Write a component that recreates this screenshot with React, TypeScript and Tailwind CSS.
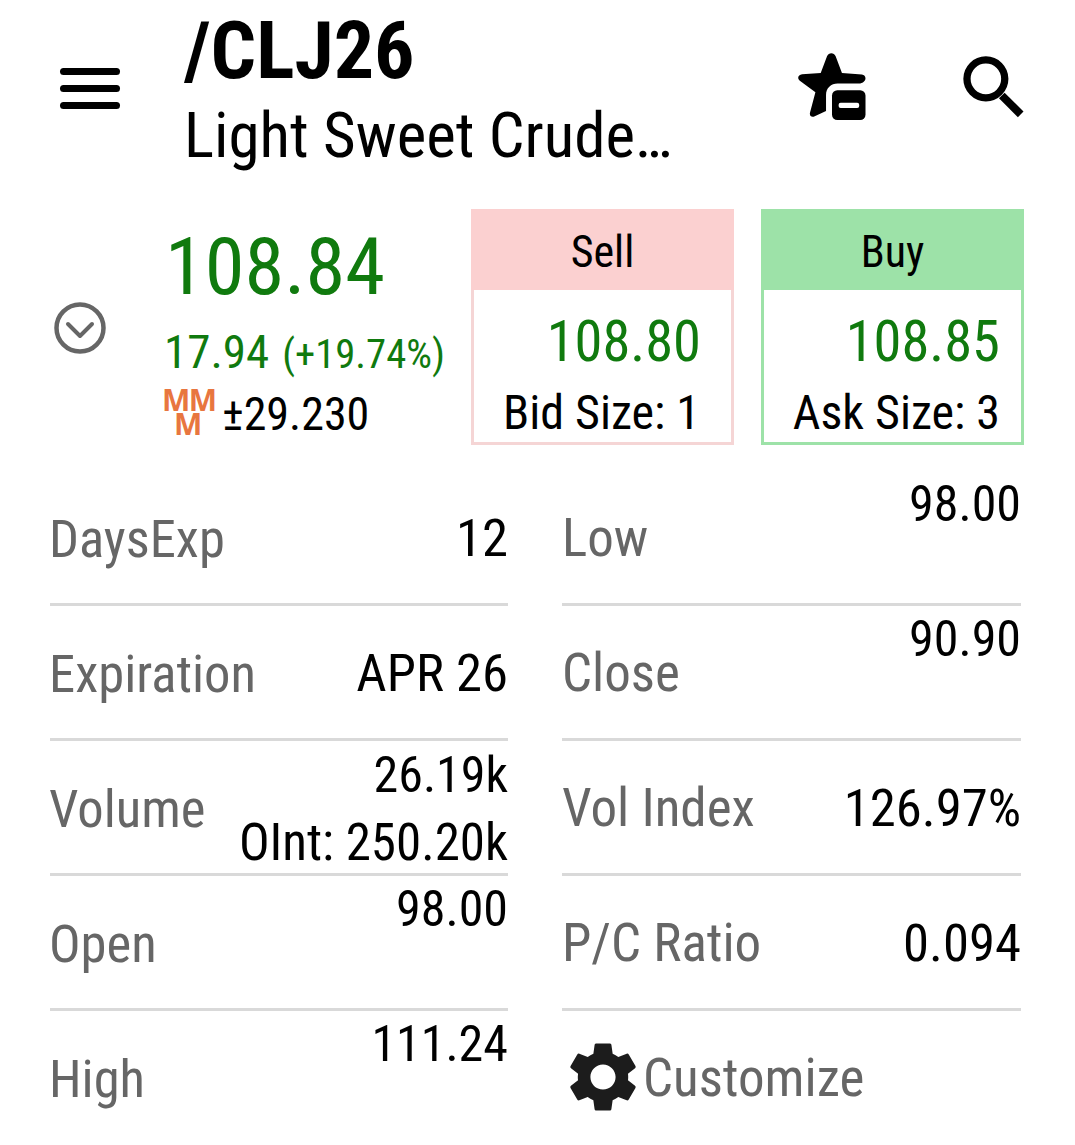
const GREEN = "text-[#107a0e]";

function StarMinus() {
  return (
    <svg viewBox="110 65 210 205" className="h-[68px] w-[70px]">
      <path
        fill="#000"
        d="M200 78C205 66 221 66 226 78L245 128L305 133C318 134 320 150 308 157L300 160H232C212 160 197 174 197 195V243L163 259C152 264 146 256 149 247L165 186L118 152C109 145 113 133 125 132L181 128Z"
      />
      <rect x="215" y="180" width="101" height="90" rx="16" fill="#000" />
      <rect x="235" y="218" width="62" height="16" rx="6" fill="#fff" />
    </svg>
  );
}

function Gear() {
  return (
    <svg viewBox="0 0 24 24" className="mr-[-2px] mb-[4px] ml-[-9px] h-[84px] w-[84px] shrink-0" fill="#1c1c1c">
      <path d="M19.140 12.940c.04-.3.06-.61.06-.94 0-.32-.02-.64-.07-.94l2.030-1.580c.18-.14.23-.41.12-.61l-1.920-3.320c-.12-.22-.37-.29-.59-.22l-2.390.96c-.5-.38-1.030-.7-1.620-.94l-.36-2.540c-.04-.24-.24-.41-.48-.41h-3.840c-.24 0-.43.17-.47.41l-.36 2.540c-.59.24-1.130.57-1.620.94l-2.390-.96c-.22-.08-.47 0-.59.22L2.740 8.870c-.12.21-.08.47.12.61l2.030 1.580c-.05.3-.09.63-.09.94s.02.64.07.94l-2.030 1.580c-.18.14-.23.41-.12.61l1.920 3.320c.12.22.37.29.59.22l2.390-.96c.5.38 1.030.7 1.620.94l.36 2.540c.05.24.24.41.48.41h3.840c.24 0 .44-.17.47-.41l.36-2.540c.59-.24 1.130-.56 1.620-.94l2.390.96c.22.08.47 0 .59-.22l1.920-3.320c.12-.22.07-.47-.12-.61l-2.010-1.580zM12 15.600c-1.980 0-3.600-1.620-3.600-3.600s1.620-3.600 3.600-3.600 3.600 1.620 3.600 3.600-1.620 3.600-3.600 3.600z" />
    </svg>
  );
}

function Quote({ side, size, price }: { side: string; size: string; price: string }) {
  const isSell = side === "Sell";
  return (
    <div className={`flex h-[236px] w-[263px] flex-col border-[3px] ${isSell ? "border-[#f5d5d5]" : "border-[#9de2a8]"}`}>
      <div className={`-mx-[3px] -mt-[3px] flex h-[81px] items-center justify-center pt-[4px] text-[44px] text-black ${isSell ? "bg-[#fbd0d0]" : "bg-[#9de2a8]"}`}>
        {side}
      </div>
      <div className={`mt-[18px] text-right text-[56.500px] leading-[68px] ${GREEN} ${isSell ? "pr-[30px]" : "pr-[21px]"}`}>{price}</div>
      <div className={`mt-[9px] text-right text-[48px] leading-[56px] text-black ${isSell ? "pr-[31px]" : "pr-[21px]"}`}>{size}</div>
    </div>
  );
}

type Line = { text: string; small?: boolean; wide?: boolean };
type Cell = { label: string; value: Line[]; top?: boolean };

const LEFT: Cell[] = [
  { label: "DaysExp", value: [{ text: "12" }] },
  { label: "Expiration", value: [{ text: "APR 26" }] },
  { label: "Volume", value: [{ text: "26.19k", small: true }, { text: "OInt: 250.20k", wide: true }] },
  { label: "Open", value: [{ text: "98.00", small: true }], top: true },
  { label: "High", value: [{ text: "111.24", small: true }], top: true },
];

const RIGHT: Cell[] = [
  { label: "Low", value: [{ text: "98.00", small: true }], top: true },
  { label: "Close", value: [{ text: "90.90", small: true }], top: true },
  { label: "Vol Index", value: [{ text: "126.97%" }] },
  { label: "P/C Ratio", value: [{ text: "0.094" }] },
];

function Row({ cell, last, shifted }: { cell: Cell; last?: boolean; shifted?: boolean }) {
  return (
    <div className={`flex h-[135px] items-center justify-between ${last ? "" : "border-b-[3px] border-[#d9d9d9]"}`}>
      <span className={`text-[#666666] ${last ? "mt-[1px]" : "mt-[4px]"} ${shifted ? "-ml-[1px] text-[52.600px]" : "text-[53px]"}`}>{cell.label}</span>
      <div className={`text-right leading-[67px] text-black ${cell.top ? "self-start" : "pt-[3px]"}`}>
        {cell.value.map((line) => (
          <div key={line.text} className={line.small ? "text-[50px]" : line.wide ? "text-[51px]" : "text-[52.700px]"}>
            {line.text}
          </div>
        ))}
      </div>
    </div>
  );
}

export default function App() {
  return (
    <div className="h-[1145px] w-[1075px] overflow-hidden bg-white font-['Roboto',sans-serif] font-stretch-condensed">
      <header className="flex h-[209px] items-start">
        <div className="mt-[68px] ml-[60px] flex w-[60px] flex-col gap-[10px]">
          <div className="h-[7px] rounded-full bg-black" />
          <div className="h-[7px] rounded-full bg-black" />
          <div className="h-[7px] rounded-full bg-black" />
        </div>
        <div className="ml-[64px] w-[613px]">
          <div className="mt-[6px] text-[80px] leading-[90px] font-bold text-black">/CLJ26</div>
          <div className="mt-[4px] text-[63px] leading-[72px] text-black">Light Sweet Crude…</div>
        </div>
        <div className="mt-[52px]">
          <StarMinus />
        </div>
        <svg viewBox="605 73 190 190" className="mt-[55px] ml-[95px] h-[63px] w-[63px]" fill="none" stroke="#000">
          <circle cx="677" cy="145" r="57" strokeWidth="22" />
          <path d="M725 195L782 252" strokeWidth="24" />
        </svg>
      </header>

      <section className="flex items-start pl-[54px]">
        <svg viewBox="0 0 52 52" className="mt-[93px] h-[52px] w-[52px] shrink-0" fill="none" stroke="#666">
          <circle cx="26" cy="26" r="23.500" strokeWidth="4.500" />
          <path d="M14 22L26 34L38 22" strokeLinecap="round" strokeLinejoin="round" strokeWidth="4" />
        </svg>
        <div className="ml-[59px] w-[306px]">
          <div className={`mt-[10px] text-[80.500px] leading-[96px] ${GREEN}`}>108.84</div>
          <div className={`mt-[7px] -ml-[1px] flex items-baseline gap-[13px] leading-[60px] ${GREEN}`}>
            <span className="text-[47px]">17.94</span>
            <span className="text-[40.700px]">(+19.74%)</span>
          </div>
          <div className="-mt-[1px] -ml-[3px] flex items-center gap-[9px]">
            <div className="mb-[4px] w-[51px] text-center font-['Open_Sans',sans-serif] text-[30px] leading-[24px] font-bold tracking-[-1.500px] text-[#e8763f] font-stretch-normal">
              <div>MM</div>
              <div>M</div>
            </div>
            <span className="text-[46px] leading-[62px] text-black">±29.230</span>
          </div>
        </div>
        <div className="flex gap-[27px]">
          <Quote side="Sell" price="108.80" size="Bid Size: 1" />
          <Quote side="Buy" price="108.85" size="Ask Size: 3" />
        </div>
      </section>

      <section className="mt-[26px] grid grid-cols-[458px_459px] gap-x-[54px] pl-[50px]">
        <div>
          {LEFT.map((c, i) => (
            <Row key={c.label} cell={c} shifted last={i === LEFT.length - 1} />
          ))}
        </div>
        <div>
          {RIGHT.map((c) => (
            <Row key={c.label} cell={c} />
          ))}
          <div className="flex h-[135px] items-center pl-[8px]">
            <Gear />
            <span className="text-[53px] text-[#666666]">Customize</span>
          </div>
        </div>
      </section>
    </div>
  );
}
